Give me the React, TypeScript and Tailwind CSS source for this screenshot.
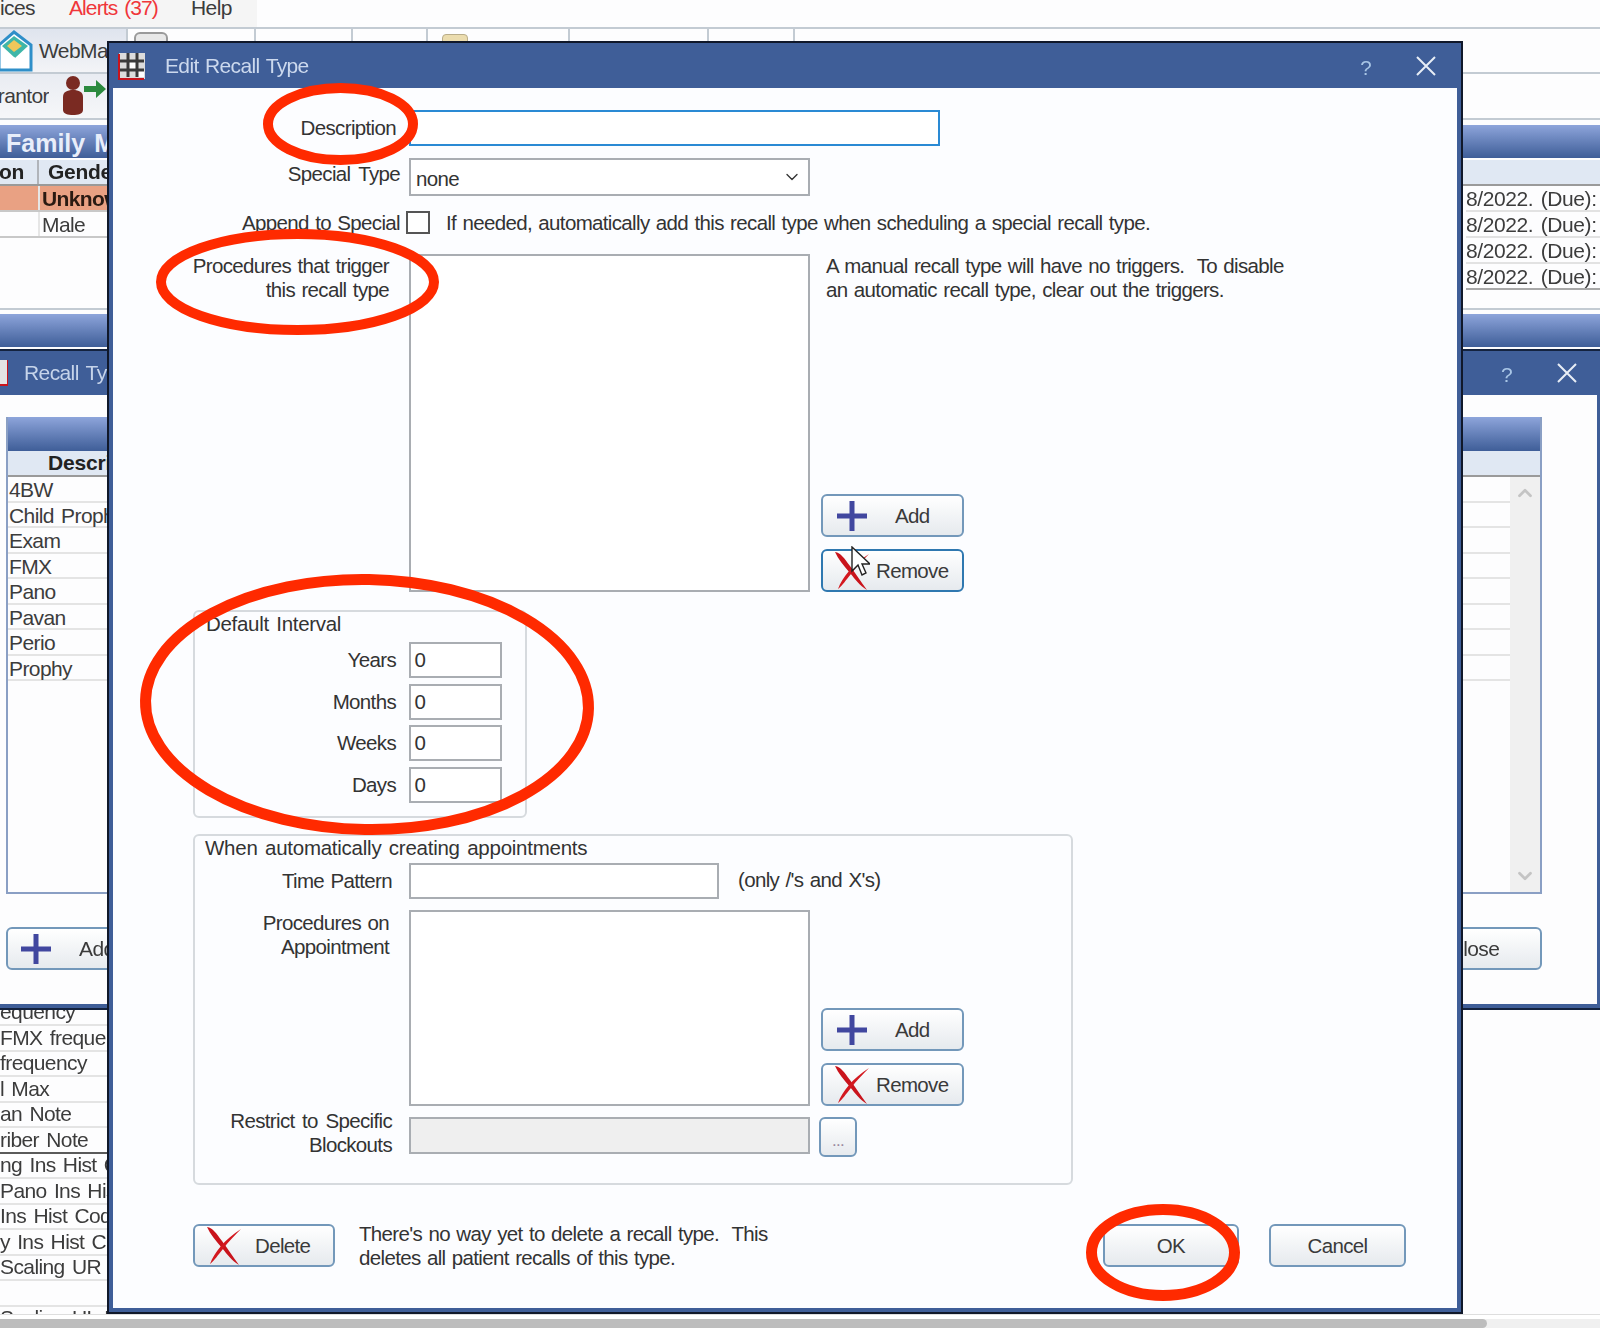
import { ChevronDown, ChevronUp } from 'lucide-react';
import type { ReactNode } from 'react';

const PlusIcon = () => (
  <svg width="34" height="34" viewBox="0 0 34 34" className="shrink-0">
    <path d="M17 2v30M2 17h30" stroke="#41479f" strokeWidth="5" />
  </svg>
);

const RedX = () => (
  <svg width="38" height="40" viewBox="0 0 38 40" className="shrink-0">
    <path d="M2 1c6 1 9 6 15 14 6 8 11 16 17 24-7-4-12-11-17-17C11 15 5 8 2 1z" fill="#c9141c" />
    <path d="M36 3C28 8 21 14 16 20 11 26 7 32 5 38c4-3 8-9 13-15 5-7 12-14 18-20z" fill="#d3181f" />
  </svg>
);

function Btn({ children, className = '', focused = false }: { children?: ReactNode; className?: string; focused?: boolean }) {
  return (
    <div
      className={`flex items-center rounded-md border-2 bg-gradient-to-b from-[#ffffff] to-[#e6eaee] text-[#3a3a3a] ${focused ? 'border-[#2f78b0]' : 'border-[#7398ba]'} ${className}`}
    >
      {children}
    </div>
  );
}

const Field = ({ className = '', children }: { className?: string; children?: ReactNode }) => (
  <div className={`border-2 border-[#a9adb2] bg-white ${className}`}>{children}</div>
);

const Ring = ({ className, w, h, stroke, rotate = 0 }: { className: string; w: number; h: number; stroke: number; rotate?: number }) => (
  <svg width={w} height={h} viewBox={`0 0 ${w} ${h}`} className={`absolute ${className}`}>
    <ellipse
      cx={w / 2}
      cy={h / 2}
      rx={w / 2 - stroke / 2 - 1}
      ry={h / 2 - stroke / 2 - 1}
      fill="none"
      stroke="#ff2a00"
      strokeWidth={stroke}
      transform={`rotate(${rotate} ${w / 2} ${h / 2})`}
    />
  </svg>
);

const TitleGlyph = () => (
  <svg width="28" height="28" viewBox="0 0 28 28" className="shrink-0">
    <rect x="1" y="1" width="26" height="26" fill="#dcdcdc" />
    <rect x="11" y="10" width="7" height="7" fill="#fff" />
    <rect x="20" y="19" width="6" height="6" fill="#fff" />
    <path d="M10 1v24M19 1v24M2 9h24M2 18h24" stroke="#3a3a3a" strokeWidth="3" />
    <path d="M1 2v25h25" stroke="#c8141c" strokeWidth="2" fill="none" />
  </svg>
);

const CloseGlyph = () => (
  <svg width="22" height="22" viewBox="0 0 22 22" className="shrink-0">
    <path d="M2 2l18 18M20 2L2 20" stroke="#e8eef6" strokeWidth="2" />
  </svg>
);

const recallRows = ['4BW', 'Child Prophy', 'Exam', 'FMX', 'Pano', 'Pavan', 'Perio', 'Prophy'];
const lowerRows = [
  'equency',
  'FMX frequency',
  'frequency',
  'l Max',
  'an Note',
  'riber Note',
  'ng Ins Hist Code',
  'Pano Ins Hist Code',
  'Ins Hist Code',
  'y Ins Hist Code',
  'Scaling UR Ins',
  '',
  'Scaling UL Ins',
];

function Background() {
  return (
    <div className="flex h-[1328px] w-[1600px] flex-col bg-[#fdfdfe] text-[21px] tracking-[-0.6px] text-[#3c3c3c] [word-spacing:2px]">
      {/* menu */}
      <div className="flex h-[29px] shrink-0 border-b-2 border-[#c3cbd3]">
        <div className="flex w-[257px] items-center overflow-hidden bg-[#f5f5f5] pb-3">
          <span className="w-[69px]">ices</span>
          <span className="w-[122px] text-[#f0363a] tracking-[-0.9px]">Alerts (37)</span>
          <span>Help</span>
        </div>
      </div>

      {/* toolbars */}
      <div className="flex h-[45px] shrink-0 border-b-2 border-[#c3cbd3]">
        <div className="flex w-[126px] items-center gap-[6px] overflow-hidden bg-gradient-to-b from-[#dfe4ee] to-[#f3f4f7]">
          <svg width="36" height="42" viewBox="0 0 36 42" className="-ml-[3px] shrink-0">
            <path d="M2 15L17 2l17 13v25H2z" fill="#fff" stroke="#2f8fc9" strokeWidth="3" />
            <path d="M5 16L17 6l14 10-13 12z" fill="#3fb6a8" />
            <path d="M10 16l7-6 8 6-8 6z" fill="#f0c75a" />
            <path d="M4 38l13-11 14 11z" fill="#fff" />
          </svg>
          <span className="whitespace-nowrap">WebMail</span>
        </div>
        <div className="w-[128px] border-l-2 border-[#c3cbd3] pl-[6px] pt-[3px]">
          <div className="h-[20px] w-[34px] rounded-t-md border-2 border-[#9a9a9a] bg-[#e8e8e8]" />
        </div>
        <div className="w-[97px] border-l-2 border-[#c3cbd3]" />
        <div className="w-[75px] border-l-2 border-[#c3cbd3]" />
        <div className="w-[142px] border-l-2 border-[#c3cbd3] pl-[14px] pt-[5px]">
          <div className="h-[14px] w-[26px] rounded-t-sm border border-[#b9ad8a] bg-[#ebdcae]" />
        </div>
        <div className="w-[139px] border-l-2 border-[#c3cbd3]" />
        <div className="w-[88px] border-x-2 border-[#c3cbd3]" />
      </div>
      <div className="flex h-[46px] shrink-0 border-b-2 border-[#c3cbd3]">
        <div className="flex w-[110px] items-center overflow-hidden bg-gradient-to-b from-[#e9ecf2] to-[#f6f7f9]">
          <span className="flex w-[49px] shrink-0 justify-end overflow-hidden whitespace-nowrap">Guarantor</span>
          <svg width="46" height="42" viewBox="0 0 46 42" className="ml-[13px] shrink-0">
            <circle cx="11" cy="8" r="7" fill="#7a2a22" />
            <path d="M1 22c0-5 4-7 10-7s10 2 10 7v13c0 4-5 5-10 5s-10-1-10-5z" fill="#7a2a22" />
            <path d="M22 11h12V5l10 9-10 9v-6H22z" fill="#2b8a3e" />
          </svg>
        </div>
      </div>

      {/* family grid */}
      <div className="mt-[5px] h-[33px] shrink-0 bg-gradient-to-b from-[#8ea5db] to-[#3f5e98] pl-[6px] text-[25px] font-bold leading-[37px] tracking-normal text-[#e8eefa]">
        Family Module
      </div>
      <div className="mt-[2px] flex h-[26px] shrink-0 border-b-2 border-[#9a9a9a] bg-[#e0e8f3] font-bold leading-[24px] tracking-[-0.3px] text-[#222]">
        <span className="-ml-[1px] w-[40px] overflow-hidden border-r-2 border-[#b0b4ba]">on</span>
        <span className="pl-[9px]">Gender</span>
      </div>
      {['Unknown', 'Male', '', ''].map((g, i) => (
        <div key={i} className="flex h-[26px] shrink-0 leading-[26px]">
          <div className={`flex w-[110px] overflow-hidden ${i === 0 ? 'bg-[#e9a183]' : ''} ${i < 2 ? 'border-b-2 border-[#c8c8c8]' : ''}`}>
            <span className={`w-[40px] shrink-0 ${i < 2 ? 'border-r-2 border-[#e6e6e6]' : ''}`} />
            <span className={`whitespace-nowrap pl-[2px] ${i === 0 ? 'font-bold text-[#2a1a12]' : ''}`}>{g}</span>
          </div>
          <div className="w-[1356px]" />
          <div className={`flex-1 border-b-2 ${i === 3 ? 'border-[#a8a8a8]' : 'border-[#e2e2e2]'} whitespace-nowrap tracking-[-0.4px]`}>8/2022. (Due):</div>
        </div>
      ))}
      <div className="mt-[18px] h-[2px] shrink-0 bg-[#c3cbd3]" />
      <div className="mt-[4px] h-[33px] shrink-0 bg-gradient-to-b from-[#8ea5db] to-[#3f5e98]" />

      {/* recall types window */}
      <div className="mt-[2px] flex h-[661px] shrink-0 flex-col border-y-2 border-[#14233f] bg-[#3f5e98] pb-[4px] pr-[3px]">
        <div className="flex h-[44px] shrink-0 items-center text-[#c6d4ea]">
          <div className="h-[26px] w-[8px] border-b-2 border-r border-[#c8141c] bg-[#e4e4e4]" />
          <span className="ml-[16px] text-[21px]">Recall Types</span>
          <span className="ml-auto w-[55px] pt-[3px] text-[21px] text-[#a9c6e6]">?</span>
          <div className="mr-[19px]">
            <CloseGlyph />
          </div>
        </div>
        <div className="flex flex-1 flex-col bg-[#fdfdfe] pl-[6px] pr-[55px] pt-[22px]">
          <div className="flex h-[477px] flex-col border-2 border-t-0 border-[#8a9fc4]">
            <div className="h-[34px] shrink-0 bg-gradient-to-b from-[#8ea5db] to-[#3f5e98]" />
            <div className="h-[26px] shrink-0 border-b-2 border-[#9a9a9a] bg-[#e0e8f3] pl-[40px] font-bold leading-[24px] tracking-[-0.2px] text-[#222]">
              Description
            </div>
            <div className="flex flex-1">
              <div className="flex-1">
                {recallRows.map((r) => (
                  <div key={r} className="h-[25.5px] border-b-2 border-[#e4e4e4] pl-[1px] leading-[26px]">
                    {r}
                  </div>
                ))}
              </div>
              <div className="flex w-[30px] flex-col items-center justify-between bg-[#f0f0f0] py-[5px] text-[#c4c4c4]">
                <ChevronUp size={22} strokeWidth={3} />
                <ChevronDown size={22} strokeWidth={3} />
              </div>
            </div>
          </div>
          <div className="mt-[33px] flex justify-between">
            <Btn className="h-[43px] w-[130px] pl-[11px]">
              <PlusIcon />
              <span className="ml-[26px]">Add</span>
            </Btn>
            <Btn className="h-[43px] w-[128px] justify-center pr-[8px]">Close</Btn>
          </div>
        </div>
      </div>

      {/* lower list */}
      <div className="h-[304px] w-[110px] shrink-0 overflow-hidden leading-[24px]">
        {lowerRows.map((t, i) => (
          <div
            key={i}
            className={`flex items-end whitespace-nowrap border-b-2 ${i === 5 ? 'border-[#5a5a5a]' : 'border-[#e4e4e4]'} ${i === 0 ? 'h-[16px]' : 'h-[25.5px]'}`}
          >
            {t}
          </div>
        ))}
      </div>
      <div className="flex-1 border-t border-[#dedede] bg-white" />
      <div className="h-[9px] shrink-0 bg-[#f0f0f0]">
        <div className="h-full w-[1487px] rounded-r-md bg-[#bdbdbd]" />
      </div>
    </div>
  );
}

function Dialog() {
  return (
    <div className="absolute left-[107px] top-[41px] flex h-[1273px] w-[1356px] flex-col border-2 border-[#10182a] bg-[#3f5e98] text-[20.5px] leading-[24px] tracking-[-0.65px] text-[#333] [word-spacing:1.3px]">
      <div className="flex h-[45px] shrink-0 items-center pl-[9px] pr-[24px] text-[#ccd9ee]">
        <TitleGlyph />
        <span className="ml-[19px] text-[21px]">Edit Recall Type</span>
        <span className="ml-auto mr-[44px] pt-[4px] text-[#a9c6e6]">?</span>
        <CloseGlyph />
      </div>

      <div className="mx-[4px] mb-[4px] flex-1 bg-[#fcfdff] pt-[22px]">
        {/* description */}
        <div className="flex h-[36px] items-center">
          <span className="w-[283px] pb-[1px] text-right">Description</span>
          <div className="ml-[13px] h-full w-[531px] border-2 border-[#2a8ad4] bg-white" />
        </div>
        <div className="mt-[12px] flex h-[38px]">
          <span className="w-[287px] pt-[4px] text-right [word-spacing:3px]">Special Type</span>
          <Field className="ml-[9px] flex w-[401px] items-center justify-between pl-[5px] pr-[6px]">
            <span className="pt-[4px]">none</span>
            <ChevronDown size={20} strokeWidth={1.6} />
          </Field>
        </div>
        <div className="mt-[15px] flex h-[23px] items-center">
          <span className="w-[287px] whitespace-nowrap text-right">Append to Special</span>
          <div className="ml-[6px] h-[23px] w-[24px] border-2 border-[#555] bg-white" />
          <span className="ml-[16px] whitespace-nowrap">If needed, automatically add this recall type when scheduling a special recall type.</span>
        </div>

        {/* triggers */}
        <div className="mt-[20px] flex h-[338px]">
          <span className="w-[276px] text-right">
            Procedures that trigger
            <br />
            this recall type
          </span>
          <Field className="ml-[20px] w-[401px]" />
          <div className="ml-[11px] flex flex-col">
            <div className="pl-[5px]">
              A manual recall type will have no triggers.&nbsp; To disable
              <br />
              an automatic recall type, clear out the triggers.
            </div>
            <Btn className="mt-auto h-[43px] w-[143px] pl-[12px]">
              <PlusIcon />
              <span className="ml-[26px]">Add</span>
            </Btn>
            <Btn focused className="relative mt-[12px] h-[43px] w-[143px] pl-[10px]">
              <RedX />
              <span className="ml-[5px]">Remove</span>
              <svg width="20" height="34" viewBox="0 0 20 34" className="absolute left-[27px] top-[-5px]">
                <path d="M2 1v24l6-6 4 10 4-2-4-9h8z" fill="#fff" stroke="#222" strokeWidth="1.4" />
              </svg>
            </Btn>
          </div>
        </div>

        {/* default interval */}
        <div className="ml-[80px] mt-[18px] h-[208px] w-[334px] rounded-md border-2 border-[#d6dade]">
          <div className="h-[24px] pl-[11px] tracking-[-0.3px] [word-spacing:2px]">Default Interval</div>
          <div className="mt-[6px] flex flex-col gap-[5.5px]">
            {['Years', 'Months', 'Weeks', 'Days'].map((l) => (
              <div key={l} className="flex h-[36px] items-center">
                <span className="w-[201px] text-right">{l}</span>
                <Field className="ml-[12.5px] flex h-full w-[93px] items-center pl-[4px]">0</Field>
              </div>
            ))}
          </div>
        </div>

        {/* appointments */}
        <div className="ml-[80px] mt-[16px] h-[351px] w-[880px] rounded-md border-2 border-[#d6dade]">
          <div className="h-[24px] pl-[10px] tracking-[-0.25px] [word-spacing:2px]">When automatically creating appointments</div>
          <div className="mt-[3px] flex h-[36px] items-center">
            <span className="w-[197px] text-right">Time Pattern</span>
            <Field className="ml-[17px] h-full w-[310px]" />
            <span className="ml-[19px] pb-[3px]">(only /'s and X's)</span>
          </div>
          <div className="mt-[11px] flex h-[196px]">
            <span className="w-[194px] pt-[1px] text-right">
              Procedures on
              <br />
              Appointment
            </span>
            <Field className="ml-[20px] w-[401px]" />
            <div className="ml-[11px] flex flex-col justify-end gap-[12px]">
              <Btn className="h-[43px] w-[143px] pl-[12px]">
                <PlusIcon />
                <span className="ml-[26px]">Add</span>
              </Btn>
              <Btn className="h-[43px] w-[143px] pl-[10px]">
                <RedX />
                <span className="ml-[5px]">Remove</span>
              </Btn>
            </div>
          </div>
          <div className="mt-[11px] flex h-[37px]">
            <span className="-mt-[8px] w-[197px] text-right [word-spacing:2.5px]">
              Restrict to Specific
              <br />
              Blockouts
            </span>
            <Field className="ml-[17px] w-[401px] border-[#8f8f8f] !bg-[#efefef]" />
            <Btn className="ml-[9px] h-[40px] w-[38px] justify-center pt-[8px] text-[17px] text-[#9a8aa0]">...</Btn>
          </div>
        </div>

        {/* footer */}
        <div className="mt-[39px] flex h-[43px]">
          <Btn className="ml-[80px] w-[142px] pl-[10px]">
            <RedX />
            <span className="ml-[12px]">Delete</span>
          </Btn>
          <div className="ml-[24px] -mt-[2px]">
            There's no way yet to delete a recall type.&nbsp; This
            <br />
            deletes all patient recalls of this type.
          </div>
          <Btn className="ml-auto w-[136px] justify-center">OK</Btn>
          <Btn className="ml-[30px] mr-[51px] w-[137px] justify-center">Cancel</Btn>
        </div>
      </div>
    </div>
  );
}

export default function App() {
  return (
    <div className="relative h-[1328px] w-[1600px] overflow-hidden font-['Liberation_Sans',Arial,sans-serif]">
      <div className="blur-[0.6px]">
        <Background />
        <Dialog />
      </div>
      <Ring className="left-[262px] top-[82px]" w={157} h={84} stroke={10} />
      <Ring className="left-[155px] top-[228px]" w={285} h={108} stroke={10} />
      <Ring className="left-[139px] top-[573px]" w={456} h={263} stroke={11} rotate={1} />
      <Ring className="left-[1085px] top-[1203px]" w={156} h={99} stroke={11} />
    </div>
  );
}
